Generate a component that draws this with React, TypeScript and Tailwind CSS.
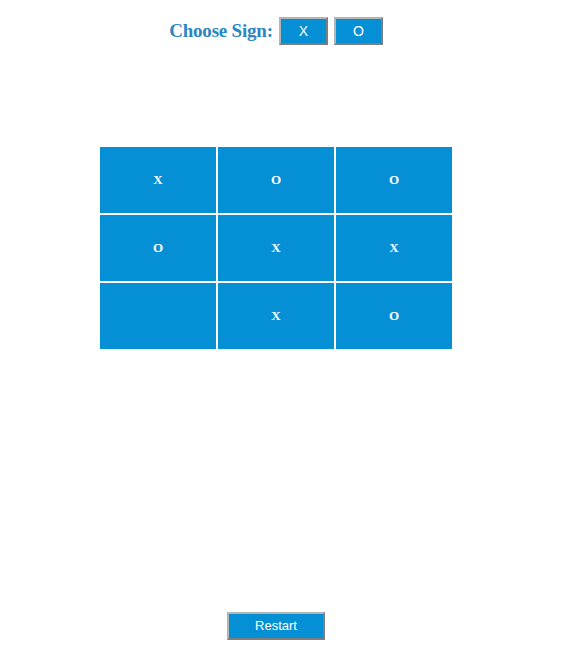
import { useState } from 'react';

const initial = ['X', 'O', 'O', 'O', 'X', 'X', '', 'X', 'O'];

export default function App() {
  const [cells, setCells] = useState<string[]>(initial);
  const [sign, setSign] = useState('X');

  return (
    <div className="w-[552px] min-h-[672px] bg-white flex flex-col items-center">
      {/* Sign chooser */}
      <div className="flex items-center mt-[17px] h-[28px]">
        <span className="font-['Liberation_Serif',serif] font-bold text-[19px] text-[#2a86c4] mr-[6px] tracking-[-0.2px]">
          Choose Sign:
        </span>
        <button
          onClick={() => setSign('X')}
          className="w-[49px] h-[28px] bg-[#0590d6] text-white text-[14px] font-['Liberation_Sans',sans-serif] border-2 border-t-[#b5b5b5] border-l-[#b5b5b5] border-b-[#7d7d7d] border-r-[#7d7d7d]"
        >
          X
        </button>
        <button
          onClick={() => setSign('O')}
          className="ml-[6px] w-[49px] h-[28px] bg-[#0590d6] text-white text-[14px] font-['Liberation_Sans',sans-serif] border-2 border-t-[#b5b5b5] border-l-[#b5b5b5] border-b-[#7d7d7d] border-r-[#7d7d7d]"
        >
          O
        </button>
      </div>

      {/* Board */}
      <div className="mt-[102px] grid grid-cols-[116px_116px_116px] grid-rows-[66px_66px_66px] gap-[2px]">
        {cells.map((c, i) => (
          <div
            key={i}
            onClick={() => {
              if (c) return;
              const next = [...cells];
              next[i] = sign;
              setCells(next);
            }}
            className="bg-[#0590d6] flex items-center justify-center text-white font-['Liberation_Serif',serif] font-bold text-[13px] cursor-pointer"
          >
            {c}
          </div>
        ))}
      </div>

      {/* Restart */}
      <button
        onClick={() => setCells(Array(9).fill(''))}
        className="mt-[263px] w-[98px] h-[28px] bg-[#0590d6] text-white text-[13px] font-['Liberation_Sans',sans-serif] border-2 border-t-[#b5b5b5] border-l-[#b5b5b5] border-b-[#7d7d7d] border-r-[#7d7d7d]"
      >
        Restart
      </button>
    </div>
  );
}
